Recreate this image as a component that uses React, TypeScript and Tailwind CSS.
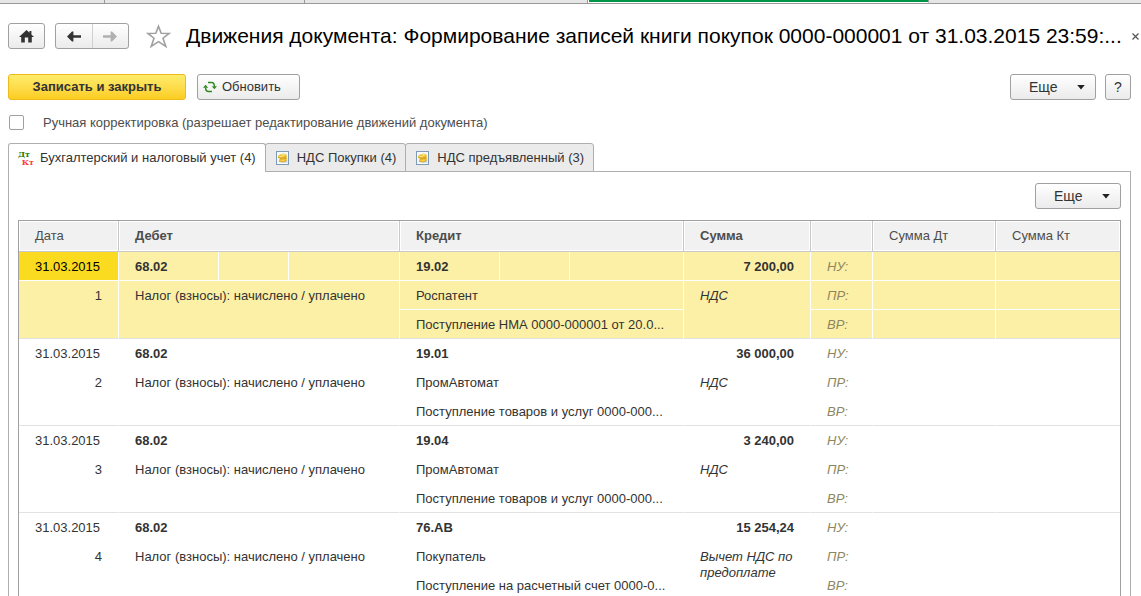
import type { ReactNode } from "react";

type Entry = {
  n: number;
  date: string;
  debit: string;
  debitNote: string;
  credit: string;
  creditLines: [string, string];
  sum: string;
  note: string;
};

const DEBIT_NOTE = "Налог (взносы): начислено / уплачено";

const entries: Entry[] = [
  { n: 1, date: "31.03.2015", debit: "68.02", debitNote: DEBIT_NOTE, credit: "19.02", creditLines: ["Роспатент", "Поступление НМА 0000-000001 от 20.0..."], sum: "7 200,00", note: "НДС" },
  { n: 2, date: "31.03.2015", debit: "68.02", debitNote: DEBIT_NOTE, credit: "19.01", creditLines: ["ПромАвтомат", "Поступление товаров и услуг 0000-000..."], sum: "36 000,00", note: "НДС" },
  { n: 3, date: "31.03.2015", debit: "68.02", debitNote: DEBIT_NOTE, credit: "19.04", creditLines: ["ПромАвтомат", "Поступление товаров и услуг 0000-000..."], sum: "3 240,00", note: "НДС" },
  { n: 4, date: "31.03.2015", debit: "68.02", debitNote: DEBIT_NOTE, credit: "76.АВ", creditLines: ["Покупатель", "Поступление на расчетный счет 0000-0..."], sum: "15 254,24", note: "Вычет НДС по предоплате" },
];

const buttonBase =
  "flex items-center rounded-[3px] border border-[#a0a0a0] bg-linear-to-b from-white to-[#ebebeb] text-[#333333]";

function HomeIcon() {
  return (
    <svg width="15" height="13" viewBox="0 0 15 13" fill="#333333" aria-hidden="true">
      <path d="M7.5 0 L10.5 2.8 V1 H12.4 V4.6 L15 7 H12.8 V12.5 H9.2 V7.5 H5.8 V12.5 H2.2 V7 H0 Z" />
    </svg>
  );
}

function ArrowIcon({ forward = false }: { forward?: boolean }) {
  return (
    <svg width="14" height="11" viewBox="0 0 14 11" fill={forward ? "#b0b0b0" : "#333333"} aria-hidden="true">
      {forward ? (
        <path d="M14 5.5 L9 0.5 H7.6 V4.2 H0 V6.8 H7.6 V10.5 H9 Z" />
      ) : (
        <path d="M0 5.5 L5 0.5 H6.4 V4.2 H14 V6.8 H6.4 V10.5 H5 Z" />
      )}
    </svg>
  );
}

function StarIcon() {
  return (
    <svg width="25" height="24" viewBox="0 0 25 24" fill="none" stroke="#a0a0a0" strokeWidth="1.6" aria-hidden="true">
      <path d="M12.5 2.2 L15.2 9.2 L23.2 9.4 L17 14.2 L19.8 22.4 L12.5 17.6 L5.2 22.4 L8 14.2 L1.8 9.4 L9.8 9.2 Z" />
    </svg>
  );
}

function RefreshIcon() {
  return (
    <svg width="14" height="12" viewBox="0 0 14 12" aria-hidden="true">
      <g fill="none" stroke="#2f8a1d" strokeWidth="1.5">
        <path d="M5 1.5 H8.5 C10.5 1.5 11.4 2.8 11.4 5.5" />
        <path d="M9 10.5 H5.5 C3.5 10.5 2.6 9.2 2.6 6.5" />
      </g>
      <path d="M8.8 5.2 H14 L11.4 8.2 Z M0 6.8 H5.2 L2.6 3.8 Z" fill="#2f8a1d" />
    </svg>
  );
}

function LedgerIcon() {
  return (
    <span className="flex w-4 flex-col text-left font-['DejaVu_Serif',serif] text-[8px] leading-[8px] font-bold" aria-hidden="true">
      <span className="text-[#1f7a00]">Дт</span>
      <span className="self-end text-[#ff3b3b]">Кт</span>
    </span>
  );
}

function CoinsIcon() {
  return (
    <svg width="13" height="14" viewBox="0 0 13 14" aria-hidden="true">
      <rect x="0.5" y="0.5" width="12" height="13" fill="#f4f9fd" stroke="#7d9bb8" />
      <path d="M8 12 H11.5 V7 Z" fill="#cfdeea" />
      <path d="M4 3.4 L7.4 2.6 L10.6 3.6 L10.8 9.6 L7.4 11.2 L3 10.4 L2.8 8.8 L4 7.8 L2 6.6 L2.2 4.8 Z" fill="#f2c330" />
      <path d="M5 4 L7.4 3.3 L9.6 4 L7.4 4.7 Z M2.8 5.4 L5 5 L7 5.7 L5 6.3 Z M4 8.9 L7 8.3 L9 8.9 L7 9.6 Z" fill="#fff09a" />
      <path d="M2.2 6.6 L6.8 7.3 L10.6 5.6 M4.2 8 L7 8.2 L10.6 7.4 M3 10.4 L7.2 11.2 L10.6 9.6" fill="none" stroke="#c08a10" strokeWidth="0.6" />
    </svg>
  );
}

function MoreButton() {
  return (
    <button type="button" className={`${buttonBase} h-[26px] w-[86px] justify-between pr-[10px] pl-[18px] text-sm`}>
      Еще
      <svg width="8" height="5" viewBox="0 0 8 5" fill="#222222" aria-hidden="true">
        <path d="M0.2 0 H7.8 L4 4.4 Z" />
      </svg>
    </button>
  );
}

function Tab({ active = false, icon, children }: { active?: boolean; icon: ReactNode; children: ReactNode }) {
  return (
    <button
      type="button"
      role="tab"
      aria-selected={active}
      className={
        active
          ? "flex h-[29px] items-center gap-[6px] rounded-t-[3px] border border-b-0 border-[#aeaeae] bg-white pr-[9px] pl-[9px]"
          : "-ml-px flex h-[29px] items-center gap-2 rounded-t-[3px] border border-[#aeaeae] bg-[#ebebeb] pr-[9px] pl-[10px]"
      }
    >
      {icon}
      {children}
    </button>
  );
}

function HeadCell({ span = 1, strong = false, children }: { span?: number; strong?: boolean; children?: ReactNode }) {
  return (
    <th
      colSpan={span}
      className={`h-[31px] border-r border-b border-r-[#c8c8c8] border-b-[#c8c8c8] bg-[#f1f1f1] px-4 py-0 text-left shadow-[inset_0_0_0_1px_#fff] last:border-r-0 ${strong ? "font-bold" : "font-normal"}`}
    >
      {children}
    </th>
  );
}

const cell = "h-[29px] border-r border-b border-white px-4 pt-[7px] pb-0 align-top last:border-r-0";
const endCell = `${cell} border-b-[#e2e2e2]`;
const tag = "text-[#8c8760] italic";

function EntryRows({ entry, selected }: { entry: Entry; selected: boolean }) {
  return (
    <tbody className={selected ? "bg-[#fcf0a6]" : "bg-white"}>
      <tr>
        <td className={`${cell} ${selected ? "bg-[#fadb1f] text-black" : ""}`}>{entry.date}</td>
        <td className={`${cell} font-bold`}>{entry.debit}</td>
        <td className={cell} />
        <td className={cell} />
        <td className={`${cell} font-bold`}>{entry.credit}</td>
        <td className={cell} />
        <td className={cell} />
        <td className={`${cell} text-right font-bold`}>{entry.sum}</td>
        <td className={`${cell} ${tag}`}>НУ:</td>
        <td className={cell} />
        <td className={cell} />
      </tr>
      <tr>
        <td rowSpan={2} className={`${endCell} text-right`}>{entry.n}</td>
        <td rowSpan={2} colSpan={3} className={endCell}>{entry.debitNote}</td>
        <td colSpan={3} className={cell}>{entry.creditLines[0]}</td>
        <td rowSpan={2} className={`${endCell} italic`}>{entry.note}</td>
        <td className={`${cell} ${tag}`}>ПР:</td>
        <td className={cell} />
        <td className={cell} />
      </tr>
      <tr>
        <td colSpan={3} className={`${endCell} truncate`}>{entry.creditLines[1]}</td>
        <td className={`${endCell} ${tag}`}>ВР:</td>
        <td className={endCell} />
        <td className={endCell} />
      </tr>
    </tbody>
  );
}

export default function App() {
  return (
    <div className="flex h-screen flex-col overflow-hidden bg-white font-['Liberation_Sans',Arial,sans-serif] text-[13px] leading-4 text-[#333333]">
      <div className="flex h-1 shrink-0 border-b border-[#999999] bg-[#e6e6e6]">
        <div className="w-[105px] border-r border-[#999999]" />
        <div className="w-[200px] border-r border-[#999999]" />
        <div className="w-[283px] border-r border-[#999999]" />
        <div className="w-[341px] border-x border-b border-white border-r-[#999999] bg-[#009646]" />
      </div>

      <header className="mt-[19px] flex h-[26px] shrink-0 items-center pl-2">
        <button type="button" aria-label="Домой" className={`${buttonBase} h-[26px] w-[37px] shrink-0 justify-center`}>
          <HomeIcon />
        </button>
        <div className={`${buttonBase} ml-[10px] h-[26px] w-[74px] shrink-0`}>
          <button type="button" aria-label="Назад" className="flex h-full flex-1 items-center justify-center border-r border-[#d0d0d0]">
            <ArrowIcon />
          </button>
          <button type="button" aria-label="Вперед" className="flex h-full flex-1 items-center justify-center">
            <ArrowIcon forward />
          </button>
        </div>
        <button type="button" aria-label="В избранное" className="ml-[17px] shrink-0">
          <StarIcon />
        </button>
        <h1 className="ml-[15px] min-w-0 flex-1 truncate text-[21px] leading-[28px] text-black">
          Движения документа: Формирование записей книги покупок 0000-000001 от 31.03.2015 23:59:...
        </h1>
        <button type="button" aria-label="Закрыть" className="flex w-3 shrink-0 justify-end pr-[2px]">
          <svg width="7" height="7" viewBox="0 0 7 7" stroke="#555555" strokeWidth="1.2" aria-hidden="true">
            <path d="M0.5 0.5 L6.5 6.5 M6.5 0.5 L0.5 6.5" />
          </svg>
        </button>
      </header>

      <div className="mt-[25px] flex shrink-0 items-center pr-[10px] pl-2">
        <button
          type="button"
          className="h-[26px] w-[178px] rounded-[3px] border border-[#efbb1c] bg-linear-to-b from-[#ffec6a] to-[#fbcd1c] font-bold"
        >
          Записать и закрыть
        </button>
        <button type="button" className={`${buttonBase} ml-[11px] h-[26px] w-[103px] gap-[5px] pl-[5px]`}>
          <RefreshIcon />
          Обновить
        </button>
        <div className="ml-auto flex gap-[9px]">
          <MoreButton />
          <button type="button" aria-label="Справка" className={`${buttonBase} h-[26px] w-[26px] justify-center text-sm`}>
            ?
          </button>
        </div>
      </div>

      <label className="mt-[15px] flex h-[15px] shrink-0 items-center gap-[19px] pl-[9px] text-[#4d4d4d]">
        <input type="checkbox" className="size-[15px] appearance-none rounded-[2px] border border-[#a0a0a0] bg-white" />
        Ручная корректировка (разрешает редактирование движений документа)
      </label>

      <div role="tablist" className="z-10 mt-[13px] -mb-px flex shrink-0 pl-2">
        <Tab active icon={<LedgerIcon />}>Бухгалтерский и налоговый учет (4)</Tab>
        <Tab icon={<CoinsIcon />}>НДС Покупки (4)</Tab>
        <Tab icon={<CoinsIcon />}>НДС предъявленный (3)</Tab>
      </div>

      <main className="mr-[10px] ml-2 flex-1 border-x border-t border-[#aeaeae] px-[9px] pt-[11px]">
        <div className="flex justify-end">
          <MoreButton />
        </div>
        <div className="mt-[11px] border border-[#a0a0a0]">
          <table className="w-full table-fixed border-separate border-spacing-0">
            <colgroup>
              <col className="w-[100px]" />
              <col className="w-[100px]" />
              <col className="w-[70px]" />
              <col className="w-[111px]" />
              <col className="w-[100px]" />
              <col className="w-[70px]" />
              <col className="w-[114px]" />
              <col className="w-[127px]" />
              <col className="w-[62px]" />
              <col className="w-[123px]" />
              <col />
            </colgroup>
            <thead className="text-[#4d4d4d]">
              <tr>
                <HeadCell>Дата</HeadCell>
                <HeadCell span={3} strong>Дебет</HeadCell>
                <HeadCell span={3} strong>Кредит</HeadCell>
                <HeadCell strong>Сумма</HeadCell>
                <HeadCell />
                <HeadCell>Сумма Дт</HeadCell>
                <HeadCell>Сумма Кт</HeadCell>
              </tr>
            </thead>
            {entries.map((entry) => (
              <EntryRows key={entry.n} entry={entry} selected={entry.n === 1} />
            ))}
          </table>
        </div>
      </main>
    </div>
  );
}
